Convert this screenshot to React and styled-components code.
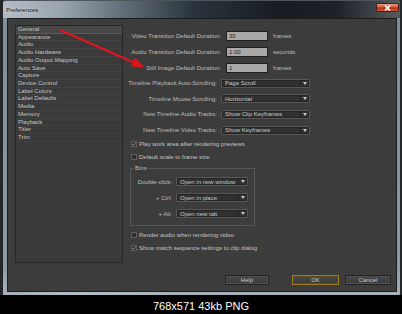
import React from 'react';
import styled, { createGlobalStyle } from 'styled-components';

const Global = createGlobalStyle`
  html, body { margin: 0; padding: 0; background: #000; }
  body { font-family: "Liberation Sans", Arial, sans-serif; }
  * { box-sizing: border-box; }
`;

const Page = styled.div`
  position: relative;
  width: 402px;
  height: 314px;
  overflow: hidden;
  display: flex;
  flex-direction: column;
  background: #000;
`;

const Window = styled.div`
  height: 295px;
  display: flex;
  flex-direction: column;
  padding: 0 2px 0 3px;
  background: #25282b;
`;

const Frame = styled.div`
  flex: 1;
  display: flex;
  flex-direction: column;
  border-radius: 3px 3px 0 0;
  background:
    linear-gradient(90deg, rgba(255,255,255,0) 0%, rgba(255,255,255,0.18) 20%, rgba(255,255,255,0) 45%),
    linear-gradient(180deg, #7f8b96 0%, #8d99a4 90%, #a7b2bc 100%);
`;

const TitleBar = styled.div`
  height: 18px;
  display: flex;
  align-items: flex-start;
  justify-content: space-between;
  padding: 0 1px 0 3px;
  border-top: 1px solid #4e555b;
  border-radius: 3px 3px 0 0;
  background: linear-gradient(90deg, #b3bdc6 0%, #9aa6b0 14%, #5b6873 32%, #2a343d 48%, #171c21 70%, #1d2226 84%, #555a5f 100%);
`;

const Title = styled.span`
  margin-top: 6px;
  font-size: 6px;
  line-height: 6px;
  color: #111;
  text-shadow: 0 0 3px rgba(255,255,255,0.8);
`;

const CloseButton = styled.div`
  margin-top: 2px;
  width: 23px;
  height: 9px;
  display: flex;
  align-items: center;
  justify-content: center;
  border: 1px solid #4b1c12;
  border-radius: 2px;
  background: linear-gradient(180deg, #e8a08c 0%, #d0583a 45%, #b52d12 55%, #d4603c 100%);
`;

const Client = styled.div`
  flex: 1;
  margin: 0 3px 3px 4px;
  display: flex;
  flex-direction: column;
  background: #3c3c3c;
  border: 1px solid #1c1c1c;
`;

const Body = styled.div`
  flex: 1;
  display: flex;
`;

const ListPanel = styled.div`
  margin: 6px 0 0 7px;
  width: 108px;
  height: 238px;
  background: #3a3a3a;
  border: 1px solid #262626;
  display: flex;
  flex-direction: column;
`;

const ListItem = styled.div`
  height: 7.73px;
  padding-left: 2px;
  font-size: 6px;
  line-height: 7px;
  color: #c6c6c6;
  border-bottom: 1px solid ${p => (p.$selected ? '#5a5a5a' : '#424242')};
  background: ${p => (p.$selected ? '#474747' : 'transparent')};
  white-space: nowrap;
`;

const RightPane = styled.div`
  flex: 1;
  padding-top: 8.5px;
  display: flex;
  flex-direction: column;
`;

const Row = styled.div`
  height: ${p => p.$h}px;
  display: flex;
  align-items: center;
`;

const Label = styled.span`
  width: ${p => p.$w}px;
  margin-right: ${p => p.$gap}px;
  text-align: right;
  font-size: 6px;
  color: #bdbdbd;
  white-space: nowrap;
`;

const NumberBox = styled.div`
  width: 42px;
  height: 10px;
  padding-left: 2px;
  display: flex;
  align-items: center;
  background: #a9a9a9;
  border: 1px solid #1e1e1e;
  font-size: 6px;
  color: #1a1a1a;
`;

const Unit = styled.span`
  margin-left: 5px;
  font-size: 6px;
  color: #bdbdbd;
`;

const SelectBox = styled.div`
  width: ${p => p.$w}px;
  height: 9px;
  display: flex;
  align-items: center;
  background: #303030;
  border: 1px solid #575757;
  box-shadow: inset 0 0 0 1px #262626;
  border-radius: 1px;
  font-size: 6px;
  color: #c6c6c6;
`;

const SelectText = styled.span`
  flex: 1;
  padding-left: 3px;
  white-space: nowrap;
  overflow: hidden;
`;

const SelectArrow = styled.span`
  width: 9px;
  height: 100%;
  display: flex;
  align-items: center;
  justify-content: center;
  border-left: 1px solid #262626;
`;

const CheckRow = styled.div`
  height: 12.5px;
  display: flex;
  align-items: center;
  padding-left: 8px;
  margin-top: ${p => p.$mt || 0}px;
`;

const CheckBox = styled.span`
  width: 6px;
  height: 6px;
  margin-right: 2px;
  display: flex;
  align-items: center;
  justify-content: center;
  background: #2e2e2e;
  border: 1px solid #5e5e5e;
`;

const CheckText = styled.span`
  font-size: 6px;
  color: #c4c4c4;
  white-space: nowrap;
`;

const Group = styled.fieldset`
  margin: 2.25px 0 0 7px;
  width: 125px;
  padding: 2.5px 0 3.5px 0;
  border: 1px solid #565656;
  min-width: 0;
`;

const Legend = styled.legend`
  margin-left: 3px;
  padding: 0 1px;
  font-size: 6px;
  line-height: 6px;
  color: #bdbdbd;
`;

const ButtonBar = styled.div`
  height: 23px;
  display: flex;
  justify-content: flex-end;
  align-items: flex-start;
  padding: 7px 5px 0 0;
`;

const Button = styled.div`
  width: ${p => p.$w}px;
  height: 10px;
  margin-left: ${p => p.$ml || 0}px;
  display: flex;
  align-items: center;
  justify-content: center;
  font-size: 6px;
  color: #c6c6c6;
  background: linear-gradient(180deg, #4a4a4a 0%, #3a3a3a 100%);
  border: 1px solid ${p => (p.$default ? '#9c7c1c' : '#222')};
  box-shadow: inset 0 0 0 1px ${p => (p.$default ? '#5a4a1a' : '#4f4f4f')};
`;

const Footer = styled.div`
  flex: 1;
  display: flex;
  align-items: center;
  justify-content: center;
  padding-top: 2px;
  background: #000;
  color: #fff;
  font-size: 11px;
`;

const Arrow = styled.svg`
  position: absolute;
  left: 0;
  top: 0;
  pointer-events: none;
`;

const Tri = () => (
  <svg width="4" height="3" viewBox="0 0 4 3"><path d="M0 0H4L2 3Z" fill="#c8c8c8" /></svg>
);

const Tick = () => (
  <svg width="6" height="6" viewBox="0 0 6 6"><path d="M0.8 3.2L2.3 4.8L5.4 0.6" stroke="#d8d8d8" strokeWidth="1" fill="none" /></svg>
);

const Select = ({ w, children }) => (
  <SelectBox $w={w}>
    <SelectText>{children}</SelectText>
    <SelectArrow><Tri /></SelectArrow>
  </SelectBox>
);

const items = ['General', 'Appearance', 'Audio', 'Audio Hardware', 'Audio Output Mapping', 'Auto Save', 'Capture', 'Device Control', 'Label Colors', 'Label Defaults', 'Media', 'Memory', 'Playback', 'Titler', 'Trim'];

const numberRows = [
  ['Video Transition Default Duration:', '30', 'frames'],
  ['Audio Transition Default Duration:', '1.00', 'seconds'],
  ['Still Image Default Duration:', '1', 'frames'],
];

const selectRows = [
  ['Timeline Playback Auto-Scrolling:', 'Page Scroll'],
  ['Timeline Mouse Scrolling:', 'Horizontal'],
  ['New Timeline Audio Tracks:', 'Show Clip Keyframes'],
  ['New Timeline Video Tracks:', 'Show Keyframes'],
];

const binRows = [
  ['Double-click:', 'Open in new window'],
  ['+ Ctrl:', 'Open in place'],
  ['+ Alt:', 'Open new tab'],
];

export default function App() {
  return (
    <>
      <Global />
      <Page>
        <Window>
          <Frame>
            <TitleBar>
              <Title>Preferences</Title>
              <CloseButton>
                <svg width="7" height="6" viewBox="0 0 7 6">
                  <path d="M1 0.5L6 5.5M6 0.5L1 5.5" stroke="#fff" strokeWidth="1.6" />
                </svg>
              </CloseButton>
            </TitleBar>
            <Client>
              <Body>
                <ListPanel>
                  {items.map((it, i) => (
                    <ListItem key={it} $selected={i === 0}>{it}</ListItem>
                  ))}
                </ListPanel>
                <RightPane>
                  {numberRows.map(([l, v, u]) => (
                    <Row key={l} $h={16}>
                      <Label $w={98} $gap={5}>{l}</Label>
                      <NumberBox>{v}</NumberBox>
                      <Unit>{u}</Unit>
                    </Row>
                  ))}
                  {selectRows.map(([l, v]) => (
                    <Row key={l} $h={15.6}>
                      <Label $w={94} $gap={4}>{l}</Label>
                      <Select w={89}>{v}</Select>
                    </Row>
                  ))}
                  <CheckRow>
                    <CheckBox><Tick /></CheckBox>
                    <CheckText>Play work area after rendering previews</CheckText>
                  </CheckRow>
                  <CheckRow>
                    <CheckBox />
                    <CheckText>Default scale to frame size</CheckText>
                  </CheckRow>
                  <Group>
                    <Legend>Bins</Legend>
                    {binRows.map(([l, v]) => (
                      <Row key={l} $h={16}>
                        <Label $w={41} $gap={4}>{l}</Label>
                        <Select w={72}>{v}</Select>
                      </Row>
                    ))}
                  </Group>
                  <CheckRow $mt={3}>
                    <CheckBox />
                    <CheckText>Render audio when rendering video</CheckText>
                  </CheckRow>
                  <CheckRow>
                    <CheckBox><Tick /></CheckBox>
                    <CheckText>Show match sequence settings to clip dialog</CheckText>
                  </CheckRow>
                </RightPane>
              </Body>
              <ButtonBar>
                <Button $w={44}>Help</Button>
                <Button $w={47} $ml={23} $default>OK</Button>
                <Button $w={46} $ml={6}>Cancel</Button>
              </ButtonBar>
            </Client>
          </Frame>
        </Window>
        <Footer>768x571 43kb PNG</Footer>
        <Arrow width="402" height="314" viewBox="0 0 402 314">
          <path d="M61 30.5L134 62.5" stroke="#e3141c" strokeWidth="2" strokeLinecap="round" />
          <path d="M144.5 67.2L131.2 66.4L135.2 57.4Z" fill="#e3141c" />
        </Arrow>
      </Page>
    </>
  );
}
